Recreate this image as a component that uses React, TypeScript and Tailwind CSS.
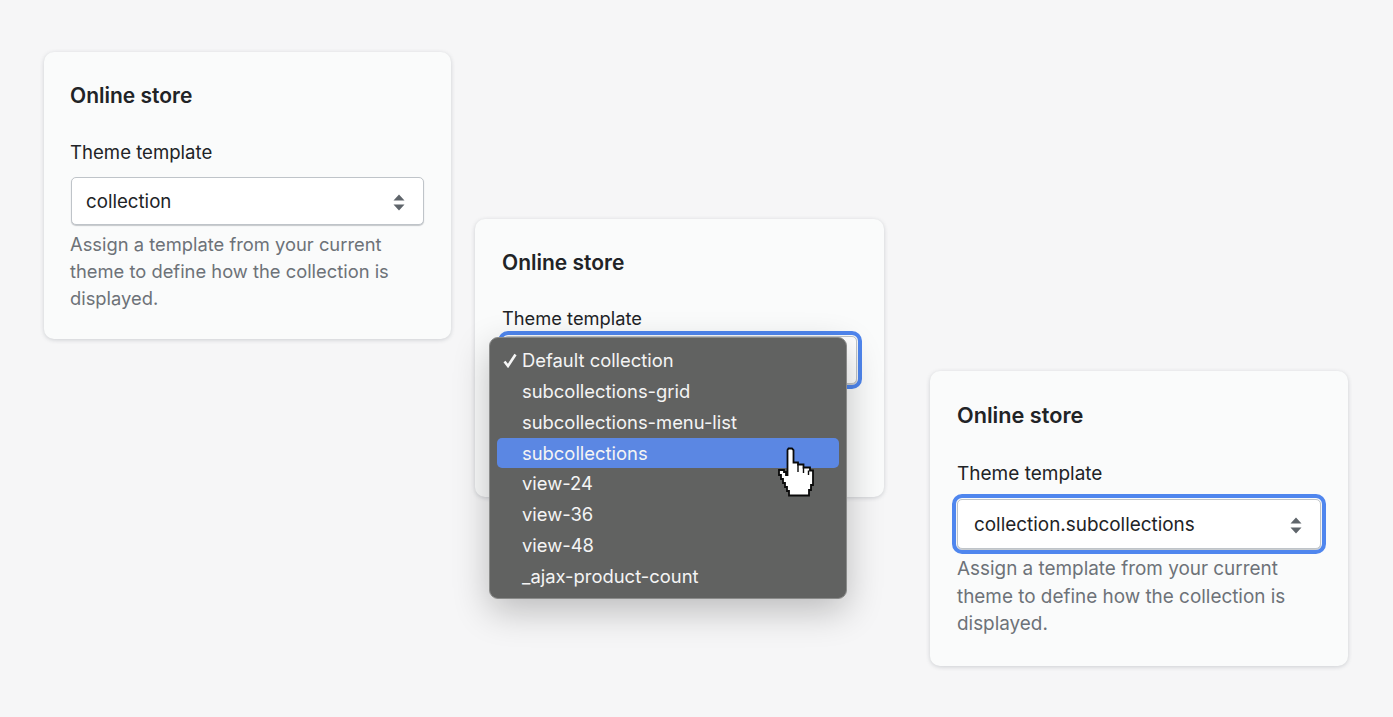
const font = "font-['Inter','Noto_Sans',sans-serif]";

function Updown() {
  return (
    <svg width="12" height="17" viewBox="0 0 12 17" className="shrink-0">
      <path d="M6 0.5 L11.5 6.5 H0.5 Z M6 16.5 L11.5 10.5 H0.5 Z" fill="#5f656b" />
    </svg>
  );
}

function Hand() {
  return (
    <svg width="38" height="52" viewBox="0 0 38 52" className="absolute left-[778px] top-[447px]">
      <path
        d="M9.5 3 L10.5 1.5 H14 L15.5 3 V15.5 H20 V17.5 H25.5 V20.5 H32 V23.5 H35 V38 H33 V43 H31 V48.5 H11 V44 H9 V40 H7 V36 H5 V32 H3 V28 H1 V23 H6 V25 H8 V28 H9.5 Z"
        fill="#fff"
        stroke="#0a0a0a"
        strokeWidth="1.8"
      />
      <path d="M20 17.5 V25 M25.5 20.5 V26 M30.5 23.5 V28" stroke="#0a0a0a" strokeWidth="1.4" fill="none" />
    </svg>
  );
}

function Check() {
  return (
    <svg width="14" height="15" viewBox="0 0 14 15" className="absolute left-[5.5px] top-[8px]">
      <path d="M1.5 8.5 L5 13 L12.5 1.5" fill="none" stroke="#f6f6f6" strokeWidth="2.6" />
    </svg>
  );
}

type SelectProps = { box: string; value?: string };

function SelectBox({ box, value }: SelectProps) {
  return (
    <div className={`bg-white rounded-[5px] border border-[#bfc4c9] shadow-[0_1px_1px_rgba(60,70,80,0.28)] flex items-center justify-between text-[#212326] ${box}`}>
      <span>{value}</span>
      <Updown />
    </div>
  );
}

const items = ["Default collection", "subcollections-grid", "subcollections-menu-list", "subcollections", "view-24", "view-36", "view-48", "_ajax-product-count"];

export default function App() {
  return (
    <div className={`relative w-[1393px] h-[717px] overflow-hidden bg-[#f6f6f7] ${font} flex items-start pl-[44px]`}>
      <section className="bg-[#fafbfb] rounded-[10px] shadow-[0_1px_4px_rgba(60,70,80,0.22)] w-[407px] h-[287px] mt-[52px] pt-[30px] px-[26px]">
        <h2 className="text-[21px] leading-[28px] font-semibold text-[#212326]">Online store</h2>
        <div className="text-[18.6px] leading-[28px] text-[#212326] mt-[28px]">Theme template</div>
        <SelectBox box="mt-[11px] mx-[1px] h-[48px] pl-[14px] pr-[18px] pt-[3px] text-[18.7px]" value="collection" />
        <p className="mt-[6px] text-[18.35px] leading-[27.2px] text-[#6d7278]">
          Assign a template from your current theme to define how the collection is displayed.
        </p>
      </section>

      <section className="bg-[#fafbfb] rounded-[10px] shadow-[0_1px_4px_rgba(60,70,80,0.22)] w-[409px] h-[278px] mt-[219px] ml-[24px] pt-[30px] px-[27px]">
        <h2 className="text-[21px] leading-[28px] font-semibold text-[#212326]">Online store</h2>
        <div className="text-[18.3px] leading-[28px] text-[#212326] mt-[27px]">Theme template</div>
        <SelectBox box="mt-[4px] ml-[1px] w-[354px] h-[48px] pl-[15px] pr-[18px] outline-[4px] outline-[#4f86ee] outline-offset-[1px]" />
      </section>

      <section className="bg-[#fafbfb] rounded-[10px] shadow-[0_1px_4px_rgba(60,70,80,0.22)] w-[418px] h-[295px] mt-[371px] ml-[46px] pt-[30px] px-[27px]">
        <h2 className="text-[21.7px] leading-[28px] font-semibold text-[#212326]">Online store</h2>
        <div className="text-[19px] leading-[28px] text-[#212326] mt-[31px]">Theme template</div>
        <SelectBox box="mt-[11px] h-[50px] pl-[16px] pr-[18px] pt-[2px] text-[18.9px] outline-[4px] outline-[#4f86ee] outline-offset-[1px]" value="collection.subcollections" />
        <p className="mt-[6px] text-[18.9px] leading-[27.6px] text-[#6d7278]">
          Assign a template from your current theme to define how the collection is displayed.
        </p>
      </section>

      <div className="absolute left-[489px] top-[337px] w-[358px] h-[262px] rounded-[9px] bg-[#616261] border border-[#8a8b8a] shadow-[0_12px_36px_rgba(0,0,0,0.24)] pt-[7px] px-[7px] text-[18.4px] text-[#f4f4f4]">
        {items.map((it, i) => (
          <div key={it} className={`relative h-[30.85px] pl-[25px] leading-[30px] rounded-[5px] ${i === 3 ? "bg-[#5b87e3]" : ""}`}>
            {i === 0 && <Check />}
            {it}
          </div>
        ))}
      </div>
      <Hand />
    </div>
  );
}
